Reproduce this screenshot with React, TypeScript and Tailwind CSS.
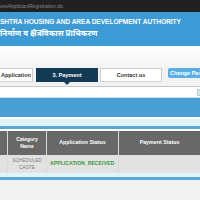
import React from 'react';

const Tab: React.FC<{ label: string; active?: boolean; className?: string }> = ({ label, active, className }) => (
  <div
    className={
      active
        ? `relative flex items-center justify-center bg-[#123a55] text-white ${className ?? ''}`
        : `flex items-center justify-center border border-[#cfcfcf] bg-white text-[#333] ${className ?? ''}`
    }
  >
    <span className="text-[5.5px] font-bold whitespace-nowrap">{label}</span>
    {active && (
      <div className="absolute left-1/2 top-full -translate-x-1/2 w-0 h-0 border-l-[3px] border-r-[3px] border-t-[3px] border-l-transparent border-r-transparent border-t-[#123a55]" />
    )}
  </div>
);

export default function App() {
  return (
    <div className="w-[200px] h-[200px] overflow-hidden bg-[#f2f2f2] font-['Liberation_Sans',Arial,sans-serif]">
      {/* browser address bar */}
      <div className="h-[12px] bg-[#202020] text-[5px] leading-[12px] text-[#8a8a8a] whitespace-nowrap">
        ure/ApplicantRegistration.do
      </div>

      {/* header */}
      <div className="h-[34px] bg-[#3c9ad5] pt-[6px] text-white whitespace-nowrap">
        <div className="text-[6.6px] font-bold leading-[7px] tracking-[-0.05px]">
          SHTRA HOUSING AND AREA DEVELOPMENT AUTHORITY
        </div>
        <div className="mt-[3px] text-[8px] font-bold leading-[10px] font-['Noto_Sans','Noto_Sans_Devanagari',sans-serif]">
          निर्माण व क्षेत्रविकास प्राधिकरण
        </div>
      </div>

      <div className="h-[22px] bg-gradient-to-b from-white to-[#f3f3f3]" />

      {/* tabs */}
      <div className="h-[14px] flex items-stretch">
        <Tab label="Application" className="w-[33px] !justify-start pl-[1px] border-l-0" />
        <Tab label="3. Payment" active className="ml-[3px] w-[62px]" />
        <Tab label="Contact us" className="ml-[2px] w-[62px]" />
        <div className="ml-[6px] self-start h-[10px] flex-1 rounded-l-[2px] bg-[#5aaee4] text-white text-[5.5px] font-bold leading-[10px] pl-[2px] whitespace-nowrap overflow-hidden">
          Change Pas
        </div>
      </div>

      <div className="h-[4px]" />
      <div className="h-[1px] bg-[#c6c6c6]" />
      <div className="h-[10px] bg-white flex justify-end items-center">
        <div className="w-[3px] h-[7px] bg-[#d6e6ee] border border-[#b9cfd9] border-r-0" />
      </div>
      <div className="h-[1px] bg-[#bfe3f3]" />

      <div className="h-[19px] bg-[#4aa0d5]" />
      <div className="h-[2px] bg-white" />
      <div className="h-[7px] bg-[#e2f4fb]" />
      <div className="h-[3px] bg-[#5ba8d4]" />
      <div className="h-[2px] bg-white" />

      {/* table */}
      <div className="grid grid-cols-[7px_38px_71px_1fr] gap-x-[1px] bg-[#d8d8d8]">
        <div className="h-[24px] bg-[#686868]" />
        <div className="h-[24px] bg-[#686868] flex items-center justify-center text-center text-[5px] font-bold leading-[7px] text-white">
          Category<br />Name
        </div>
        <div className="h-[24px] bg-[#686868] flex items-center justify-center text-[5.3px] font-bold text-white">
          Application Status
        </div>
        <div className="h-[24px] bg-[#686868] flex items-center justify-center text-[5.3px] font-bold text-white">
          Payment Status
        </div>

        <div className="h-[18px] bg-[#e2e2e2]" />
        <div className="h-[18px] bg-[#e2e2e2] flex items-center justify-center text-center text-[4.8px] leading-[7px] text-[#808080]">
          SCHEDULED<br />CASTE
        </div>
        <div className="h-[18px] bg-[#e2e2e2] flex items-center pl-[3px] text-[5.2px] font-bold text-[#3a9a3a] whitespace-nowrap">
          APPLICATION_RECEIVED
        </div>
        <div className="h-[18px] bg-[#e2e2e2]" />
      </div>

      <div className="h-[4px] bg-[#e2f4fb]" />
      <div className="h-[3px] bg-[#5ba8d4]" />
    </div>
  );
}
